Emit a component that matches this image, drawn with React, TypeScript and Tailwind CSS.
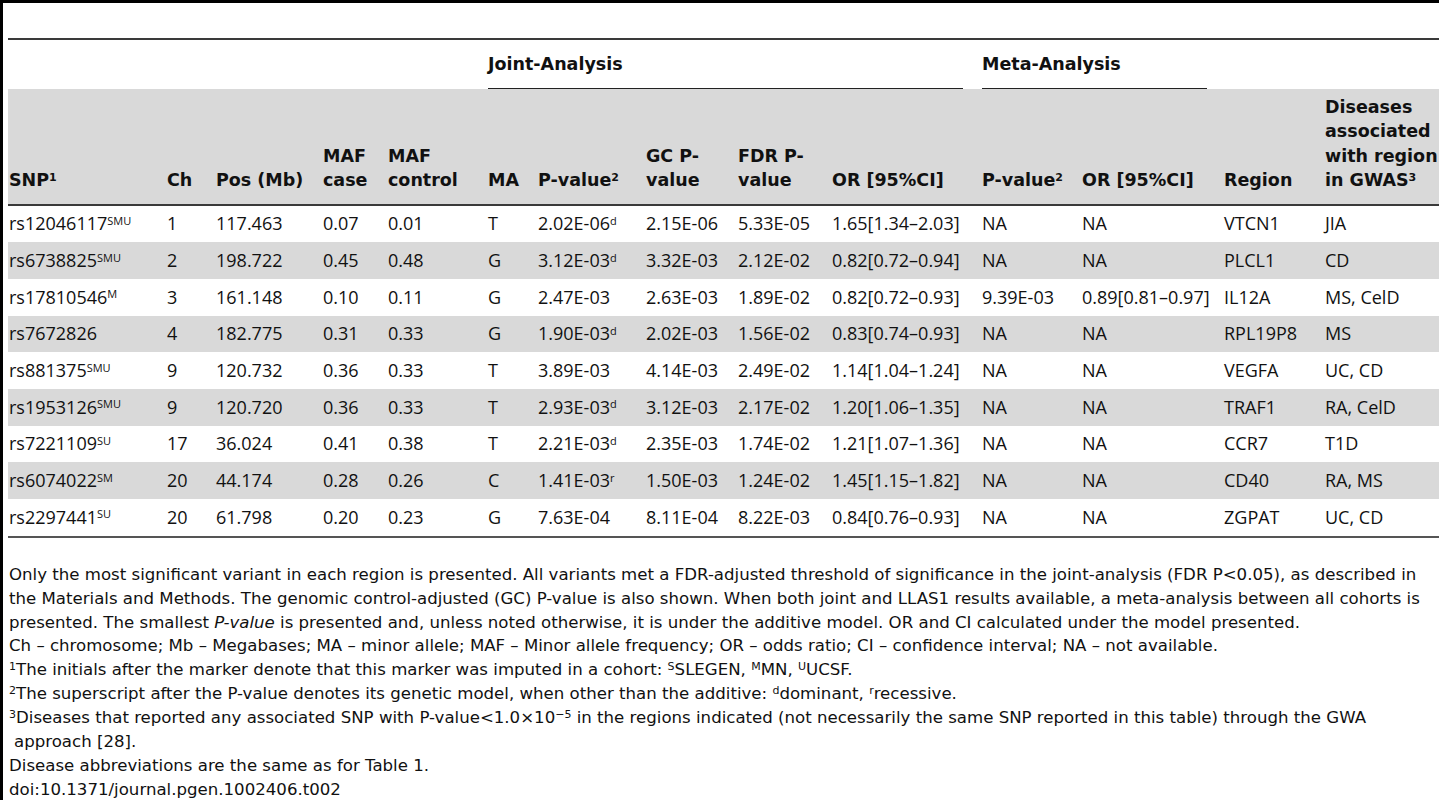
import React from "react";

type Row = {
  snp: string;
  imp?: string;
  ch: string;
  pos: string;
  mafCase: string;
  mafCtrl: string;
  ma: string;
  p: string;
  model?: string;
  gc: string;
  fdr: string;
  or: string;
  metaP: string;
  metaOr: string;
  region: string;
  gwas: string;
};

const rows: Row[] = [
  { snp: "rs12046117", imp: "SMU", ch: "1", pos: "117.463", mafCase: "0.07", mafCtrl: "0.01", ma: "T", p: "2.02E-06", model: "d", gc: "2.15E-06", fdr: "5.33E-05", or: "1.65[1.34–2.03]", metaP: "NA", metaOr: "NA", region: "VTCN1", gwas: "JIA" },
  { snp: "rs6738825", imp: "SMU", ch: "2", pos: "198.722", mafCase: "0.45", mafCtrl: "0.48", ma: "G", p: "3.12E-03", model: "d", gc: "3.32E-03", fdr: "2.12E-02", or: "0.82[0.72–0.94]", metaP: "NA", metaOr: "NA", region: "PLCL1", gwas: "CD" },
  { snp: "rs17810546", imp: "M", ch: "3", pos: "161.148", mafCase: "0.10", mafCtrl: "0.11", ma: "G", p: "2.47E-03", gc: "2.63E-03", fdr: "1.89E-02", or: "0.82[0.72–0.93]", metaP: "9.39E-03", metaOr: "0.89[0.81–0.97]", region: "IL12A", gwas: "MS, CelD" },
  { snp: "rs7672826", ch: "4", pos: "182.775", mafCase: "0.31", mafCtrl: "0.33", ma: "G", p: "1.90E-03", model: "d", gc: "2.02E-03", fdr: "1.56E-02", or: "0.83[0.74–0.93]", metaP: "NA", metaOr: "NA", region: "RPL19P8", gwas: "MS" },
  { snp: "rs881375", imp: "SMU", ch: "9", pos: "120.732", mafCase: "0.36", mafCtrl: "0.33", ma: "T", p: "3.89E-03", gc: "4.14E-03", fdr: "2.49E-02", or: "1.14[1.04–1.24]", metaP: "NA", metaOr: "NA", region: "VEGFA", gwas: "UC, CD" },
  { snp: "rs1953126", imp: "SMU", ch: "9", pos: "120.720", mafCase: "0.36", mafCtrl: "0.33", ma: "T", p: "2.93E-03", model: "d", gc: "3.12E-03", fdr: "2.17E-02", or: "1.20[1.06–1.35]", metaP: "NA", metaOr: "NA", region: "TRAF1", gwas: "RA, CelD" },
  { snp: "rs7221109", imp: "SU", ch: "17", pos: "36.024", mafCase: "0.41", mafCtrl: "0.38", ma: "T", p: "2.21E-03", model: "d", gc: "2.35E-03", fdr: "1.74E-02", or: "1.21[1.07–1.36]", metaP: "NA", metaOr: "NA", region: "CCR7", gwas: "T1D" },
  { snp: "rs6074022", imp: "SM", ch: "20", pos: "44.174", mafCase: "0.28", mafCtrl: "0.26", ma: "C", p: "1.41E-03", model: "r", gc: "1.50E-03", fdr: "1.24E-02", or: "1.45[1.15–1.82]", metaP: "NA", metaOr: "NA", region: "CD40", gwas: "RA, MS" },
  { snp: "rs2297441", imp: "SU", ch: "20", pos: "61.798", mafCase: "0.20", mafCtrl: "0.23", ma: "G", p: "7.63E-04", gc: "8.11E-04", fdr: "8.22E-03", or: "0.84[0.76–0.93]", metaP: "NA", metaOr: "NA", region: "ZGPAT", gwas: "UC, CD" },
];

// column widths measured off the reference, starting at x=8
const cols =
  "grid grid-cols-[159px_49px_107px_65px_100px_50px_108px_92px_94px_150px_100px_142px_101px_1fr]";

const bold = { fontFamily: '"DejaVu Sans", "Open Sans", sans-serif' };

const Sup = ({ children }: { children: React.ReactNode }) => (
  <sup className="text-[11px]">{children}</sup>
);

const App: React.FC = () => {
  return (
    <div
      className="h-[800px] w-full overflow-hidden bg-white border-l-[3px] border-t-[3px] border-black text-[#111]"
      style={{ fontFamily: '"Open Sans", "Noto Sans", sans-serif' }}
    >
      <div className="pl-[5px]">
        {/* top rule */}
        <div className="mt-[35px] h-[1.5px] bg-[#3a3a3a]" />

        {/* group headers */}
        <div className={`${cols} h-[49px] text-[17.5px] font-bold`} style={bold}>
          <div className="col-start-6 col-span-5 h-full flex items-center relative">
            <span>Joint-Analysis</span>
            <div className="absolute bottom-0 left-0 right-[19px] h-px bg-[#222]" />
          </div>
          <div className="col-span-2 h-full flex items-center relative">
            <span>Meta-Analysis</span>
            <div className="absolute bottom-0 left-0 right-[17px] h-px bg-[#222]" />
          </div>
        </div>

        {/* column headers */}
        <div
          className={`${cols} bg-[#d9d9d9] h-[117px] items-end pb-[11px] text-[17.5px] font-bold leading-[24.5px] border-b-2 border-[#3a3a3a]`}
          style={bold}
        >
          <div className="pl-px">SNP<Sup>1</Sup></div>
          <div>Ch</div>
          <div className="whitespace-nowrap">Pos (Mb)</div>
          <div>MAF<br />case</div>
          <div>MAF<br />control</div>
          <div>MA</div>
          <div className="whitespace-nowrap">P-value<Sup>2</Sup></div>
          <div>GC P-<br />value</div>
          <div>FDR P-<br />value</div>
          <div className="whitespace-nowrap">OR [95%CI]</div>
          <div className="whitespace-nowrap">P-value<Sup>2</Sup></div>
          <div className="whitespace-nowrap">OR [95%CI]</div>
          <div>Region</div>
          <div className="whitespace-nowrap">Diseases<br />associated<br />with region<br />in GWAS<Sup>3</Sup></div>
        </div>

        {/* data rows */}
        {rows.map((r, i) => (
          <div
            key={r.snp}
            className={`${cols} h-[36.7px] items-center text-[18px] whitespace-nowrap ${i % 2 === 1 ? "bg-[#d9d9d9]" : "bg-white"}`}
          >
            <div className="pl-px">
              {r.snp}
              {r.imp && <Sup>{r.imp}</Sup>}
            </div>
            <div>{r.ch}</div>
            <div>{r.pos}</div>
            <div>{r.mafCase}</div>
            <div>{r.mafCtrl}</div>
            <div>{r.ma}</div>
            <div>
              {r.p}
              {r.model && <Sup>{r.model}</Sup>}
            </div>
            <div>{r.gc}</div>
            <div>{r.fdr}</div>
            <div>{r.or}</div>
            <div>{r.metaP}</div>
            <div>{r.metaOr}</div>
            <div>{r.region}</div>
            <div>{r.gwas}</div>
          </div>
        ))}
        <div className="h-[2px] bg-[#555]" />

        {/* footnotes */}
        <div
          className="pt-[25px] pl-px pr-[2px] text-[16.6px] leading-[23.9px]"
          style={{ fontFamily: '"DejaVu Sans", sans-serif' }}
        >
          <p>
            Only the most significant variant in each region is presented. All variants met a FDR-adjusted threshold of
            significance in the joint-analysis (FDR P&lt;0.05), as described in the Materials and Methods. The genomic
            control-adjusted (GC) P-value is also shown. When both joint and LLAS1 results available, a meta-analysis
            between all cohorts is presented. The smallest <i>P-value</i> is presented and, unless noted otherwise, it is
            under the additive model. OR and CI calculated under the model presented.
          </p>
          <p>
            Ch – chromosome; Mb – Megabases; MA – minor allele; MAF – Minor allele frequency; OR – odds ratio; CI –
            confidence interval; NA – not available.
          </p>
          <p>
            <Sup>1</Sup>The initials after the marker denote that this marker was imputed in a cohort: <Sup>S</Sup>SLEGEN,{" "}
            <Sup>M</Sup>MN, <Sup>U</Sup>UCSF.
          </p>
          <p>
            <Sup>2</Sup>The superscript after the P-value denotes its genetic model, when other than the additive:{" "}
            <Sup>d</Sup>dominant, <Sup>r</Sup>recessive.
          </p>
          <p className="pl-[5px] -indent-[5px]">
            <Sup>3</Sup>Diseases that reported any associated SNP with P-value&lt;1.0×10<Sup>−5</Sup> in the regions
            indicated (not necessarily the same SNP reported in this table) through the GWA approach [28].
          </p>
          <p>Disease abbreviations are the same as for Table 1.</p>
          <p>doi:10.1371/journal.pgen.1002406.t002</p>
        </div>
      </div>
    </div>
  );
};

export default App;
